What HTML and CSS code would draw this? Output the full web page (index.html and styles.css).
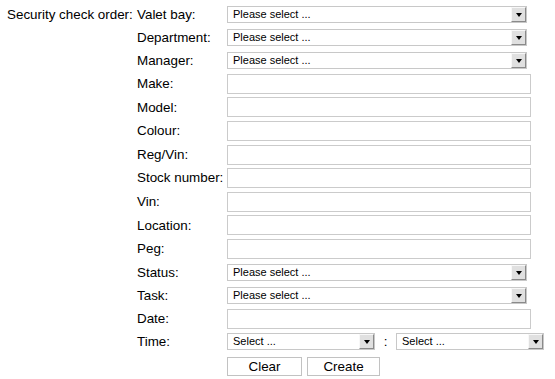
FILE: index.html
```html
<!DOCTYPE html>
<html lang="en">
<head>
  <meta charset="UTF-8">
  <title>Security check order</title>
  <link rel="stylesheet" href="styles.css">
</head>
<body>
  <form class="order">
    <div class="order-title">Security check order:</div>
    <div class="fields">
      <label>Valet bay:</label>
      <span class="select"><select><option>Please select ...</option></select></span>
      <label>Department:</label>
      <span class="select"><select><option>Please select ...</option></select></span>
      <label>Manager:</label>
      <span class="select"><select><option>Please select ...</option></select></span>
      <label class="in">Make:</label>
      <input type="text">
      <label class="in">Model:</label>
      <input type="text">
      <label class="in">Colour:</label>
      <input type="text">
      <label class="in">Reg/Vin:</label>
      <input type="text">
      <label class="in">Stock number:</label>
      <input type="text">
      <label class="in">Vin:</label>
      <input type="text">
      <label class="in">Location:</label>
      <input type="text">
      <label class="in">Peg:</label>
      <input type="text">
      <label>Status:</label>
      <span class="select"><select><option>Please select ...</option></select></span>
      <label>Task:</label>
      <span class="select"><select><option>Please select ...</option></select></span>
      <label class="in">Date:</label>
      <input type="text">
      <label>Time:</label>
      <div class="time">
        <span class="select small"><select><option>Select ...</option></select></span>
        <span class="sep">:</span>
        <span class="select small"><select><option>Select ...</option></select></span>
      </div>
      <span></span>
      <div class="buttons">
        <button type="button" class="clear">Clear</button>
        <button type="button" class="create">Create</button>
      </div>
    </div>
  </form>
</body>
</html>
```

FILE: styles.css
```css
body {
  margin: 0;
  padding: 0;
  background-color: #fff;
  color: #000;
  font-family: "Liberation Sans", Arial, sans-serif;
  font-size: 13.4px;
}

.order {
  display: flex;
  align-items: flex-start;
  padding: 3px 0 0 7px;
}

.order-title {
  width: 130px;
  line-height: 23px;
}

.fields {
  display: grid;
  grid-template-columns: 90px auto;
  align-items: center;
}

.fields label {
  line-height: 23px;
  white-space: nowrap;
}

.fields label.in {
  line-height: 23.6px;
}

.select {
  position: relative;
  display: inline-block;
  width: 300px;
  height: 17px;
  margin: 3px 0;
}

.select.small {
  width: 148px;
}

.select select {
  -webkit-appearance: none;
  appearance: none;
  width: 100%;
  height: 17px;
  margin: 0;
  padding: 0 0 0 5px;
  border: 1px solid #c8c8c8;
  border-radius: 0;
  background-color: #fff;
  font-family: "Liberation Sans", Arial, sans-serif;
  font-size: 11px;
  line-height: 15px;
  color: #000;
}

.select::after {
  content: "";
  position: absolute;
  right: 1px;
  top: 1px;
  width: 13px;
  height: 13px;
  background-color: #e0e0e0;
  border-top: 1px solid #f8f8f8;
  border-left: 1px solid #f8f8f8;
  border-right: 1px solid #8a8a8a;
  border-bottom: 1px solid #8a8a8a;
  box-sizing: border-box;
  width: 15px;
  height: 15px;
  pointer-events: none;
}

.select::before {
  content: "";
  position: absolute;
  right: 5px;
  top: 7px;
  width: 0;
  height: 0;
  border-left: 3px solid transparent;
  border-right: 3px solid transparent;
  border-top: 4px solid #000;
  z-index: 1;
  pointer-events: none;
}

.fields input {
  width: 304px;
  height: 20px;
  margin: 1.8px 0;
  padding: 0 4px;
  border: 1px solid #cbcbcb;
  box-sizing: border-box;
  font-family: "Liberation Sans", Arial, sans-serif;
  font-size: 13px;
}

.time {
  display: flex;
  align-items: center;
}

.sep {
  width: 21px;
  text-align: center;
  line-height: 17px;
}

.buttons {
  display: flex;
  gap: 5px;
  padding: 4px 0 0;
}

.buttons button {
  height: 19px;
  margin: 0;
  padding: 0;
  background-color: #fff;
  border: 1px solid #c2c2c2;
  border-radius: 0;
  font-family: "Liberation Sans", Arial, sans-serif;
  font-size: 13.4px;
  line-height: 17px;
  color: #000;
}

.buttons .clear {
  width: 75px;
}

.buttons .create {
  width: 73px;
}
```
